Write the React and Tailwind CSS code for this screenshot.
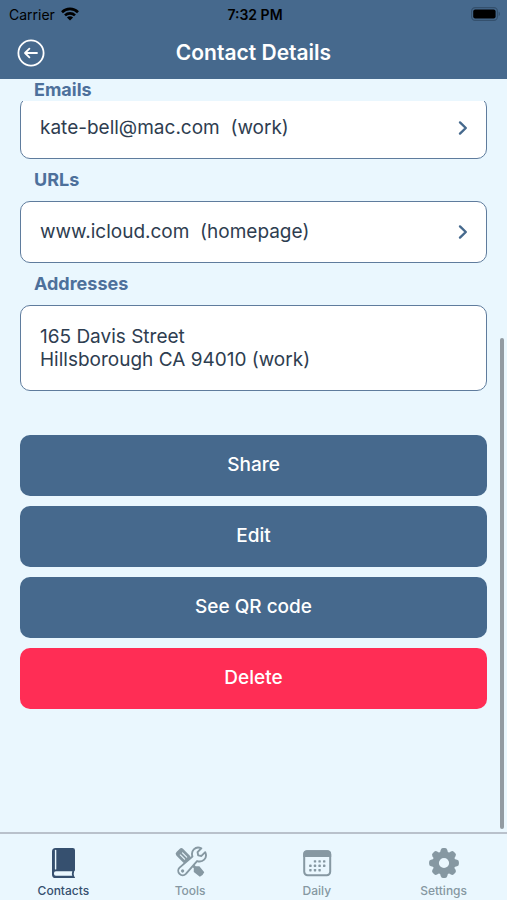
import { useState } from "react";

const tabs = [
  { name: "Contacts", Icon: BookIcon },
  { name: "Tools", Icon: ToolsIcon },
  { name: "Daily", Icon: CalendarIcon },
  { name: "Settings", Icon: GearIcon },
];

function WifiIcon() {
  return (
    <svg width="18" height="14" viewBox="0 0 18 14" aria-hidden="true">
      <g fill="none" stroke="#000" strokeWidth="2.6">
        <path d="M1 5.2a11.4 11.4 0 0 1 16 0" />
        <path d="M4 8.4a7.1 7.1 0 0 1 10 0" />
      </g>
      <path d="M9 13.6 5.9 10.6a4.4 4.4 0 0 1 6.2 0Z" />
    </svg>
  );
}

function BatteryIcon() {
  return (
    <svg width="30" height="14" viewBox="0 0 30 14" aria-hidden="true">
      <rect x="0.6" y="0.6" width="25.8" height="12.8" rx="3.6" fill="none" stroke="#34506d" strokeWidth="1.2" />
      <rect x="2.2" y="2.4" width="22.4" height="9.2" rx="2" />
      <path d="M27.6 4.8c1.8.6 1.8 3.8 0 4.4Z" fill="#34506d" />
    </svg>
  );
}

function BackIcon() {
  return (
    <svg width="28" height="28" viewBox="0 0 28 28" fill="none" stroke="#fff" strokeWidth="1.8" strokeLinecap="round" strokeLinejoin="round" aria-hidden="true">
      <circle cx="14" cy="14" r="12.6" />
      <path d="M20 14H8.200M12.400 9.600 8 14l4.400 4.400" />
    </svg>
  );
}

function Chevron() {
  return (
    <svg width="10" height="16" viewBox="0 0 10 16" fill="none" stroke="#46698d" strokeWidth="2.4" strokeLinecap="round" strokeLinejoin="round" aria-hidden="true">
      <path d="m2 2.4 5.8 5.6L2 13.6" />
    </svg>
  );
}

function BookIcon() {
  return (
    <svg width="34" height="34" viewBox="0 0 34 34" aria-hidden="true">
      <path
        fill="currentColor"
        fillRule="evenodd"
        d="M9.600 2h17.200Q29 2 29 4.200v19.600q0 1-.8 1.500-1 2.600 0 5.100.8.300.8 1.600H9.600Q6 32 6 28.400V5.600Q6 2 9.600 2ZM9.900 25.200q-2 .1-2 2.200 0 2.300 2 2.300h16.400q-.8-2.200 0-4.500Z"
      />
      <path d="M9.600 4.400v18.500" stroke="#eaf7fe" strokeWidth="1.400" strokeLinecap="round" />
    </svg>
  );
}

function ToolsIcon() {
  return (
    <svg width="34" height="34" viewBox="0 0 34 34" aria-hidden="true">
      <g transform="translate(17.500 17) scale(.86) translate(-17 -17)">
        <g transform="rotate(-45 17 17)">
          <rect x="11.500" y="-3.500" width="11" height="17" rx="3" fill="currentColor" />
          <path d="M15.200 2v7M18.800 2v7" stroke="#eaf7fe" strokeWidth="1.300" strokeLinecap="round" />
          <path fill="currentColor" d="M15.400 13h3.200v11l3 3-1 9q-3.600 1.600-7.200 0l-1-9 3-3Z" />
        </g>
        <g transform="rotate(45 17 17)">
          <path
            fill="#eaf7fe"
            stroke="currentColor"
            strokeWidth="2.200"
            strokeLinejoin="round"
            d="M13.800-4v6.200l3.200 2.200 3.200-2.200V-4c3.500 1.300 5.300 3.800 5.300 7 0 3-1.700 5.500-4.700 7l1.400 19.800a5.200 5.200 0 1 1-10.400 0L13.200 10c-3-1.500-4.700-4-4.700-7 0-3.200 1.800-5.700 5.300-7Z"
          />
          <circle cx="17" cy="30" r="1.900" fill="currentColor" />
        </g>
      </g>
    </svg>
  );
}

function CalendarIcon() {
  const dots = [
    [15, 15.4], [19.6, 15.4], [24.2, 15.4],
    [10.4, 19.8], [15, 19.8], [19.6, 19.8], [24.2, 19.8],
    [10.4, 24.2], [15, 24.2], [19.6, 24.2],
  ];
  return (
    <svg width="34" height="34" viewBox="0 0 34 34" aria-hidden="true">
      <rect x="4.200" y="5.200" width="26" height="24" rx="3.400" fill="none" stroke="currentColor" strokeWidth="2" />
      <path fill="currentColor" d="M3.200 11V7.900q0-3.700 3.700-3.700h20.600q3.700 0 3.700 3.700V11Z" />
      {dots.map(([x, y]) => (
        <rect key={`${x}-${y}`} x={x - 1.2} y={y - 1.2} width="2.400" height="2.400" rx="0.600" fill="currentColor" />
      ))}
    </svg>
  );
}

function GearIcon() {
  return (
    <svg width="34" height="34" viewBox="0 0 34 34" aria-hidden="true">
      <circle cx="17" cy="17" r="8.300" fill="none" stroke="currentColor" strokeWidth="6.400" />
      {[0, 45, 90, 135, 180, 225, 270, 315].map(angle => (
        <path key={angle} transform={`rotate(${angle} 17 17)`} fill="currentColor"
          d="M12.600 8.500 13.700 4q.5-1.900 2.200-1.900h2.200q1.700 0 2.200 1.900l1.100 4.500Z" />
      ))}
    </svg>
  );
}

function SectionTitle({ children }) {
  return (
    <h2 className="sticky top-[79px] z-10 bg-[#eaf7fe] px-[14px] text-[18px] leading-[22px] font-bold text-[#4d709b]">
      {children}
    </h2>
  );
}

function LinkCard({ href, value, label }) {
  return (
    <a href={href}
      className="flex items-center justify-between h-[62px] pl-[19px] pr-[18px] bg-white border border-[#5f7c9d] rounded-[10px]">
      <span className="whitespace-pre">{value}{"  "}({label})</span>
      <Chevron />
    </a>
  );
}

function ActionButton({ danger, children }) {
  return (
    <button type="button"
      className={`h-[61px] w-full rounded-[10px] text-[19px] font-medium text-white ${danger ? "bg-[#ff2d55]" : "bg-[#46698d]"}`}>
      {children}
    </button>
  );
}

export default function App() {
  const [active, setActive] = useState("Contacts");

  return (
    <div className="relative flex min-h-screen flex-col bg-[#eaf7fe] font-['Inter',sans-serif] text-[19px] text-[#2e3d50]">
      <header className="sticky top-0 z-20 h-[79px] bg-[#46698d]">
        <div className="grid h-7 grid-cols-3 items-center pl-[9px] pr-[6px] text-[14px] text-black">
          <div className="flex items-center gap-[6px]">
            <span>Carrier</span>
            <WifiIcon />
          </div>
          <span className="text-center font-semibold">7:32 PM</span>
          <div className="flex justify-end">
            <BatteryIcon />
          </div>
        </div>
        <div className="grid grid-cols-[28px_1fr_28px] items-center px-[17px] pt-[11px]">
          <button type="button" aria-label="Back">
            <BackIcon />
          </button>
          <h1 className="text-center text-[21px] leading-7 font-semibold text-white">Contact Details</h1>
        </div>
      </header>

      <main className="flex-1 px-5">
        <section>
          <SectionTitle>Emails</SectionTitle>
          <div className="-mt-1">
            <LinkCard href="mailto:kate-bell@mac.com" value="kate-bell@mac.com" label="work" />
          </div>
        </section>

        <section className="mt-[10px] space-y-[10px]">
          <SectionTitle>URLs</SectionTitle>
          <LinkCard href="https://www.icloud.com" value="www.icloud.com" label="homepage" />
        </section>

        <section className="mt-[10px] space-y-[10px]">
          <SectionTitle>Addresses</SectionTitle>
          <address className="bg-white border border-[#5f7c9d] rounded-[10px] px-[19px] py-[19px] not-italic leading-[23px]">
            165 Davis Street<br />
            Hillsborough CA 94010 (work)
          </address>
        </section>

        <div className="mt-11 flex flex-col gap-[10px]">
          <ActionButton>Share</ActionButton>
          <ActionButton>Edit</ActionButton>
          <ActionButton>See QR code</ActionButton>
          <ActionButton danger>Delete</ActionButton>
        </div>
      </main>

      {/* scroll indicator */}
      <div className="absolute right-[3px] top-[338px] bottom-[71px] w-1 rounded-full bg-[#929ba2]" />

      <nav className="sticky bottom-0 grid grid-cols-4 border-t-2 border-[#b9c1cb] bg-[#eaf7fe] pt-3">
        {tabs.map(({ name, Icon }) => (
          <button key={name} type="button" onClick={() => setActive(name)}
            className={`flex flex-col items-center gap-[2px] text-[12px] leading-[18px] font-medium ${active === name ? "text-[#36506f]" : "text-[#8698a2]"}`}>
            <Icon />
            {name}
          </button>
        ))}
      </nav>
    </div>
  );
}
